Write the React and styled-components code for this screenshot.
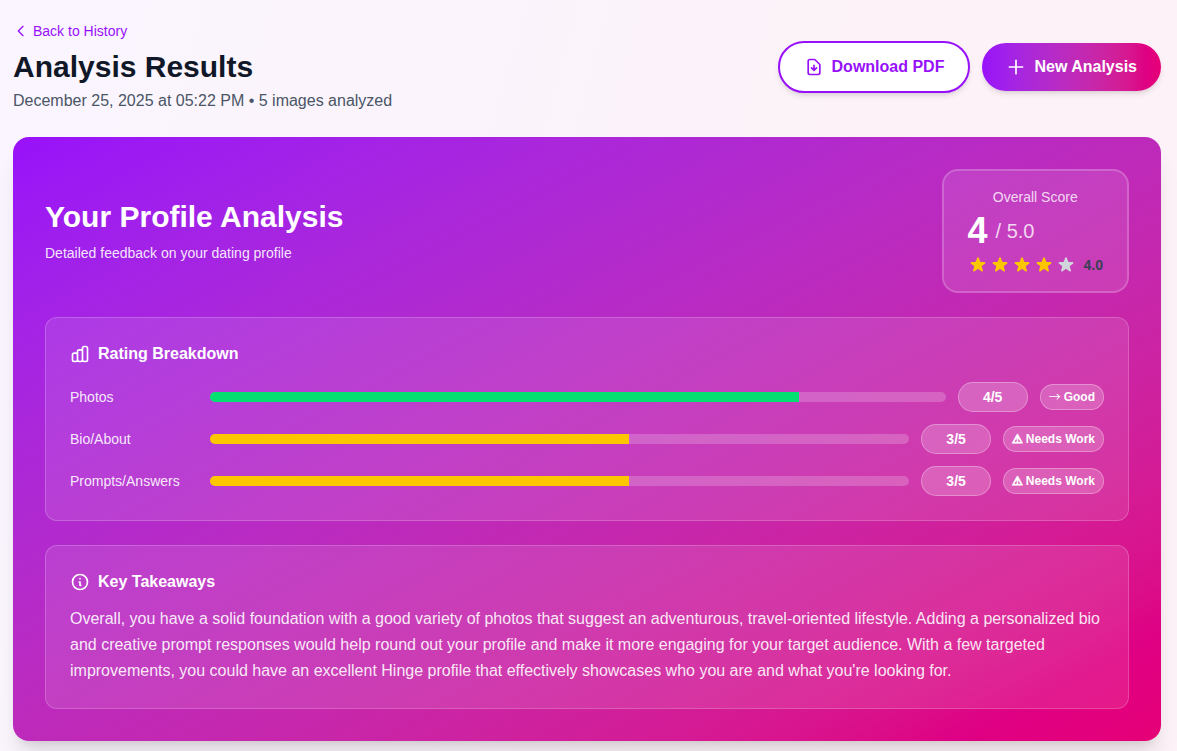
import React from 'react';
import styled, {createGlobalStyle} from "styled-components";

const PURPLE = "#9810fa";
const GRADIENT = "in oklab, oklch(55.8% 0.288 302.321), oklch(59.2% 0.249 0.584)";

const GlobalStyle = createGlobalStyle`
  *, *::before, *::after {
    box-sizing: border-box;
  }

  body {
    margin: 0;
    font-family: "Liberation Sans", Arial, sans-serif;
    font-size: 16px;
    line-height: 24px;
  }

  h1, h2, h3, p {
    margin: 0;
  }
`;

const Page = styled.main`
  min-height: 100vh;
  padding: 21px 16px 10px 13px;
  background: linear-gradient(105deg, #faf5ff, #fdf2f7 80%);
`;

const Header = styled.header`
  display: flex;
  align-items: center;
  justify-content: space-between;
  gap: 16px;
  margin-bottom: 24px;
`;

const BackLink = styled.a`
  display: flex;
  align-items: center;
  gap: 4px;
  margin-bottom: 8px;
  color: ${PURPLE};
  font-size: 14px;
  line-height: 20px;
  text-decoration: none;
`;

const Title = styled.h1`
  color: #101828;
  font-size: 30px;
  line-height: 36px;
`;

const Subtitle = styled.p`
  margin-top: 4px;
  color: #4a5565;
`;

const Actions = styled.div`
  display: flex;
  align-items: center;
  gap: 12px;
`;

const Button = styled.button`
  display: flex;
  align-items: center;
  gap: 8px;
  padding: 12px 24px;
  border: ${({$outline}) => ($outline ? `2px solid ${PURPLE}` : "none")};
  border-radius: 26px;
  background: ${({$outline}) => ($outline ? "#fff" : `linear-gradient(to right ${GRADIENT})`)};
  color: ${({$outline}) => ($outline ? PURPLE : "#fff")};
  font: bold 16px/24px "Liberation Sans", Arial, sans-serif;
  white-space: nowrap;
  box-shadow: 0 4px 6px -1px rgba(0, 0, 0, 0.1), 0 2px 4px -2px rgba(0, 0, 0, 0.1);
  cursor: pointer;
`;

const Card = styled.section`
  display: flex;
  flex-direction: column;
  gap: 24px;
  padding: 32px;
  border-radius: 16px;
  background: linear-gradient(to bottom right ${GRADIENT});
  color: #fff;
  box-shadow: 0 20px 25px -5px rgba(0, 0, 0, 0.1), 0 8px 10px -6px rgba(0, 0, 0, 0.1);
`;

const CardHeader = styled.div`
  display: flex;
  align-items: center;
  justify-content: space-between;
`;

const CardTitle = styled.h2`
  margin-bottom: 8px;
  font-size: 30px;
  line-height: 36px;
`;

const CardText = styled.p`
  color: rgba(255, 255, 255, 0.9);
  font-size: 14px;
  line-height: 20px;
`;

const ScoreBox = styled.div`
  display: flex;
  flex-direction: column;
  gap: 4px;
  padding: 16px 24px;
  border: 2px solid rgba(255, 255, 255, 0.2);
  border-radius: 16px;
  background: rgba(255, 255, 255, 0.1);
`;

const ScoreLabel = styled.div`
  color: rgba(255, 255, 255, 0.8);
  font-size: 14px;
  line-height: 20px;
  text-align: center;
`;

const Score = styled.div`
  display: flex;
  align-items: center;
  gap: 8px;
  color: rgba(255, 255, 255, 0.8);
  font-size: 20px;
  line-height: 40px;

  strong {
    color: #fff;
    font-size: 36px;
  }
`;

const Stars = styled.div`
  display: flex;
  align-items: center;
  gap: 2px;
`;

const StarValue = styled.span`
  margin-left: 6px;
  color: #364153;
  font-size: 14px;
  font-weight: bold;
  line-height: 20px;
`;

const Panel = styled.section`
  padding: 24px;
  border: 1px solid rgba(255, 255, 255, 0.2);
  border-radius: 12px;
  background: rgba(255, 255, 255, 0.1);
`;

const PanelTitle = styled.h3`
  display: flex;
  align-items: center;
  gap: 8px;
  font-size: 16px;
  line-height: 24px;
`;

const Rows = styled.div`
  display: flex;
  flex-direction: column;
  gap: 12px;
  margin-top: 16px;
`;

const Row = styled.div`
  display: flex;
  align-items: center;
  gap: 12px;
`;

const RowLabel = styled.div`
  width: 128px;
  flex-shrink: 0;
  color: rgba(255, 255, 255, 0.9);
  font-size: 14px;
  line-height: 20px;
`;

const Track = styled.div`
  flex: 1;
  height: 10px;
  border-radius: 5px;
  background: rgba(255, 255, 255, 0.2);
  overflow: hidden;
`;

const Fill = styled.div`
  height: 100%;
  background: ${({$good}) => ($good ? "#05df72" : "#fdc700")};
`;

const Pill = styled.div`
  min-width: 70px;
  padding: 4px 12px;
  border: 1px solid rgba(255, 255, 255, 0.3);
  border-radius: 15px;
  background: rgba(255, 255, 255, 0.2);
  font-size: 14px;
  font-weight: bold;
  line-height: 20px;
  text-align: center;
`;

const Badge = styled.div`
  display: flex;
  align-items: center;
  gap: 3px;
  padding: 4px 8px;
  border: 1px solid rgba(255, 255, 255, 0.3);
  border-radius: 13px;
  background: rgba(255, 255, 255, 0.2);
  font-size: 12px;
  font-weight: bold;
  line-height: 16px;
  white-space: nowrap;
`;

const Mark = styled.span`
  font-family: ${({$good}) => ($good ? '"Noto Sans CJK SC"' : '"DejaVu Sans"')}, sans-serif;
  font-weight: ${({$good}) => ($good ? "normal" : "bold")};
  -webkit-text-stroke: ${({$good}) => ($good ? "0" : "1px")} currentColor;
`;

const Takeaways = styled.p`
  margin-top: 12px;
  color: rgba(255, 255, 255, 0.9);
  line-height: 26px;
`;

const Icon = ({d, size = 20}) => (
    <svg width={size} height={size} viewBox="0 0 24 24" fill="none" stroke="currentColor"
         strokeWidth="2" strokeLinecap="round" strokeLinejoin="round" aria-hidden="true">
        <path d={d}/>
    </svg>
);

const Star = ({filled}) => (
    <svg width="20" height="20" viewBox="0 0 20 20" fill={filled ? "#fdc700" : "#d1d5dc"} aria-hidden="true">
        <path d="M9.049 2.927c.3-.921 1.603-.921 1.902 0l1.07 3.292a1 1 0 00.95.69h3.462c.969 0 1.371 1.24.588 1.81l-2.8 2.034a1 1 0 00-.364 1.118l1.07 3.292c.3.921-.755 1.688-1.54 1.118l-2.8-2.034a1 1 0 00-1.175 0l-2.8 2.034c-.784.57-1.838-.197-1.539-1.118l1.07-3.292a1 1 0 00-.364-1.118L2.98 8.72c-.783-.57-.38-1.81.588-1.81h3.461a1 1 0 00.951-.69l1.07-3.292z"/>
    </svg>
);

const icons = {
    back: "M15 19l-7-7 7-7",
    download: "M12 10v6m0 0l-3-3m3 3l3-3m2 8H7a2 2 0 01-2-2V5a2 2 0 012-2h5.586a1 1 0 01.707.293l5.414 5.414a1 1 0 01.293.707V19a2 2 0 01-2 2z",
    plus: "M12 4v16m8-8H4",
    chart: "M9 19v-6a2 2 0 00-2-2H5a2 2 0 00-2 2v6a2 2 0 002 2h2a2 2 0 002-2zm0 0V9a2 2 0 012-2h2a2 2 0 012 2v10m-6 0a2 2 0 002 2h2a2 2 0 002-2m0 0V5a2 2 0 012-2h2a2 2 0 012 2v14a2 2 0 01-2 2h-2a2 2 0 01-2-2z",
    info: "M13 16h-1v-4h-1m1-4h.01M21 12a9 9 0 11-18 0 9 9 0 0118 0z",
};

const ratings = [
    {name: "Photos", score: 4, mark: "→", status: "Good"},
    {name: "Bio/About", score: 3, mark: "⚠", status: "Needs Work"},
    {name: "Prompts/Answers", score: 3, mark: "⚠", status: "Needs Work"},
];

const App = () => {
    return (
        <Page>
            <GlobalStyle/>
            <Header>
                <div>
                    <BackLink href="#history"><Icon d={icons.back} size={16}/>Back to History</BackLink>
                    <Title>Analysis Results</Title>
                    <Subtitle>December 25, 2025 at 05:22 PM • 5 images analyzed</Subtitle>
                </div>
                <Actions>
                    <Button type="button" $outline><Icon d={icons.download}/>Download PDF</Button>
                    <Button type="button"><Icon d={icons.plus}/>New Analysis</Button>
                </Actions>
            </Header>

            <Card>
                <CardHeader>
                    <div>
                        <CardTitle>Your Profile Analysis</CardTitle>
                        <CardText>Detailed feedback on your dating profile</CardText>
                    </div>
                    <ScoreBox>
                        <ScoreLabel>Overall Score</ScoreLabel>
                        <Score><strong>4</strong><span>/ 5.0</span></Score>
                        <Stars>
                            {[1, 2, 3, 4, 5].map(n => <Star key={n} filled={n <= 4}/>)}
                            <StarValue>4.0</StarValue>
                        </Stars>
                    </ScoreBox>
                </CardHeader>

                <Panel>
                    <PanelTitle><Icon d={icons.chart}/>Rating Breakdown</PanelTitle>
                    <Rows>
                        {
                            ratings.map(
                                rating =>
                                    <Row key={rating.name}>
                                        <RowLabel>{rating.name}</RowLabel>
                                        <Track>
                                            <Fill $good={rating.score >= 4} style={{width: `${rating.score * 20}%`}}/>
                                        </Track>
                                        <Pill>{rating.score}/5</Pill>
                                        <Badge>
                                            <Mark $good={rating.score >= 4}>{rating.mark}</Mark>
                                            {rating.status}
                                        </Badge>
                                    </Row>
                            )
                        }
                    </Rows>
                </Panel>

                <Panel>
                    <PanelTitle><Icon d={icons.info}/>Key Takeaways</PanelTitle>
                    <Takeaways>
                        Overall, you have a solid foundation with a good variety of photos that suggest an adventurous,
                        travel-oriented lifestyle. Adding a personalized bio and creative prompt responses would help
                        round out your profile and make it more engaging for your target audience. With a few targeted
                        improvements, you could have an excellent Hinge profile that effectively showcases who you are
                        and what you're looking for.
                    </Takeaways>
                </Panel>
            </Card>
        </Page>
    );
};

export default App;
